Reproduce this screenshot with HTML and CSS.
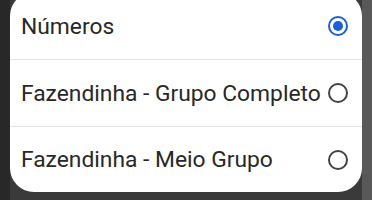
FILE: index.html
```html
<!DOCTYPE html>
<html lang="pt">
<head>
<meta charset="utf-8">
<link rel="stylesheet" href="styles.css">
</head>
<body>
<div class="sheet">
  <div class="option first">
    <span class="label">Números</span>
    <svg class="radio on" viewBox="0 0 24 24" width="24" height="24"><circle cx="12" cy="12" r="9" fill="none" stroke="currentColor" stroke-width="2"/><circle cx="12" cy="12" r="5" fill="currentColor"/></svg>
  </div>
  <div class="option">
    <span class="label">Fazendinha - Grupo Completo</span>
    <svg class="radio" viewBox="0 0 24 24" width="24" height="24"><circle cx="12" cy="12" r="9" fill="none" stroke="currentColor" stroke-width="2"/></svg>
  </div>
  <div class="option last">
    <span class="label">Fazendinha - Meio Grupo</span>
    <svg class="radio" viewBox="0 0 24 24" width="24" height="24"><circle cx="12" cy="12" r="9" fill="none" stroke="currentColor" stroke-width="2"/></svg>
  </div>
</div>
</body>
</html>
```
FILE: styles.css
```css
html, body {
  margin: 0;
  padding: 0;
}
body {
  width: 372px;
  height: 200px;
  overflow: hidden;
  background: linear-gradient(to right, #282828 0 10px, #3a3a3a 10px 362px, #585858 362px);
  font-family: Roboto, "Noto Sans", sans-serif;
}
.sheet {
  margin: -8px 10px 0 10px;
  height: 200px;
  background: #ffffff;
  border-radius: 24px;
  display: flex;
  flex-direction: column;
}
.option {
  height: 66px;
  display: flex;
  align-items: center;
  justify-content: space-between;
  padding: 0 12px 0 11px;
  border-bottom: 1px solid #e4e4e4;
  color: #282828;
  font-size: 22.8px;
}
.option.first {
  box-sizing: border-box;
  height: 68px;
  padding-top: 1px;
}
.option.last {
  border-bottom: none;
  flex: 1;
}
.label {
  white-space: nowrap;
}
.radio {
  flex: none;
  color: #444444;
}
.radio.on {
  color: #1a5fd8;
}
```
